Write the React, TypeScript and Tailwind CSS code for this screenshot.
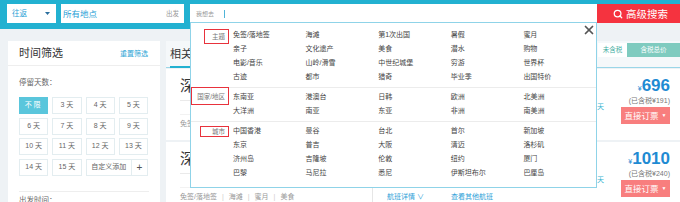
import { Search, X } from "lucide-react";

const themes = [
  ["免签/落地签", "海滩", "第1次出国", "暑假", "蜜月"],
  ["亲子", "文化遗产", "美食", "潜水", "购物"],
  ["电影/音乐", "山岭/滑雪", "中世纪城堡", "穷游", "世界杯"],
  ["古迹", "都市", "猎奇", "毕业季", "出国特价"],
];
const regions = [
  ["东南亚", "港澳台", "日韩", "欧洲", "北美洲"],
  ["大洋洲", "南亚", "东亚", "非洲", "南美洲"],
];
const cities = [
  ["中国香港", "曼谷", "台北", "首尔", "新加坡"],
  ["东京", "普吉", "大阪", "清迈", "洛杉矶"],
  ["济州岛", "吉隆坡", "伦敦", "纽约", "厦门"],
  ["巴黎", "马尼拉", "悉尼", "伊斯坦布尔", "巴厘岛"],
];
const days = ["3 天", "4 天", "5 天", "6 天", "7 天", "8 天", "9 天", "10 天", "11 天", "12 天", "13 天", "14 天", "15 天"];

const sections = [
  { label: "主题", rows: themes, box: "mt-[1px] h-[15px] w-[25px]", wrap: "pt-[5px] pb-[3px] border-b border-[#ececec]" },
  { label: "国家/地区", rows: regions, box: "-mt-[3px] h-[18px] w-[38px]", wrap: "pt-[2px] pb-[3px] border-b border-[#ececec]" },
  { label: "城市", rows: cities, box: "mt-[2px] h-[11px] w-[29px]", wrap: "pt-[2px] pb-[7px]" },
];

function Card({ price, tax }: { price: string; tax: string }) {
  return (
    <div className="flex h-[71px] bg-white">
      <div className="flex w-[431px] flex-col pl-[14px]">
        <div className="flex h-[32px] items-center border-b border-[#eaeaea] pt-[3px] text-[15px] leading-[18px] text-[#333]">
          深圳 — 曼谷 5天4晚自由行
        </div>
        <div className="h-[13px]" />
        <div className="flex flex-1 border-t border-[#f2f2f2]">
          <div className="flex w-[192px] items-start gap-[5px] pt-[4px] text-[7px] leading-[9px] text-[#999]">
            <span>免签/落地签</span><span className="text-[#ccc]">|</span><span>海滩</span>
            <span className="text-[#ccc]">|</span><span>蜜月</span><span className="text-[#ccc]">|</span><span>美食</span>
          </div>
          <div className="flex gap-[27px] border-l border-[#e6e6e6] pl-[14px] pt-[4px] text-[7px] leading-[9px] text-[#2ea1d8]">
            <span>航班详情 ∨</span>
            <span>查看其他航班</span>
          </div>
        </div>
      </div>
      <div className="w-[24px] pt-[33px] text-[7px] leading-[9px] text-[#3ab5d0]">天</div>
      <div className="flex flex-1 flex-col items-end pr-[10px] pt-[9px]">
        <div className="flex items-baseline leading-[16px] text-[#1f8bd3]">
          <span className="text-[7px]">¥</span>
          <span className="text-[17px] font-bold">{price}</span>
        </div>
        <div className="text-[7px] leading-[8px] text-[#777]">(已含税¥{tax})</div>
        <div className="mt-[2px] flex h-[17px] w-[49px] items-center justify-center gap-[3px] bg-[#f87e7e] text-white">
          <span className="text-[8.5px] leading-[10px]">直接订票</span>
          <span className="text-[5px]">▼</span>
        </div>
      </div>
    </div>
  );
}

export default function App() {
  return (
    <div className="relative h-[202px] w-[680px] overflow-hidden bg-[#eef2f5] font-[Liberation_Sans,Noto_Sans_CJK_SC,sans-serif]">
      <div className="flex h-[29px] bg-[#22b1d1] pl-[7px] pt-[4px]">
        <div className="flex h-[19px] w-[49px] items-center justify-between bg-white pl-[5px] pr-[6px]">
          <span className="text-[7.5px] leading-[10px] text-[#2a9fd6]">往返</span>
          <svg width="5" height="3" viewBox="0 0 5 3"><path d="M0 0h5L2.5 3z" fill="#2b6f9e" /></svg>
        </div>
        <div className="ml-[5px] flex h-[19px] w-[123px] items-center justify-between bg-white pl-[2px] pr-[5px]">
          <span className="text-[8.5px] leading-[10px] text-[#2a9fd6]">所有地点</span>
          <span className="text-[6.5px] leading-[10px] text-[#999]">出发</span>
        </div>
        <div className="ml-[6px] flex h-[19px] w-[407px] items-center bg-white pl-[6px]">
          <span className="text-[6px] leading-[10px] text-[#999]">我想去</span>
          <span className="ml-[10px] h-[8px] w-px bg-[#4fb4d8]" />
        </div>
        <div className="flex w-[83px] flex-col">
          <div className="flex h-[19px] items-center bg-[#f5333f] pl-[16px] text-white">
            <Search size={10} strokeWidth={3} />
            <span className="ml-[3px] text-[10.5px] leading-[12px]">高级搜索</span>
          </div>
          <div className="flex-1 bg-[#eef2f5]" />
        </div>
      </div>

      <div className="flex pt-[12px]">
        <div className="ml-[8px] w-[152px] bg-white pb-[20px]">
          <div className="flex h-[25px] items-center justify-between border-b border-[#eeeeee] pl-[11px] pr-[12px]">
            <span className="text-[11px] leading-[14px] text-[#333]">时间筛选</span>
            <span className="text-[7px] leading-[9px] text-[#2fa6d6]">重置筛选</span>
          </div>
          <div className="px-[11px] pt-[12px]">
            <div className="text-[7.5px] leading-[10px] text-[#666]">停留天数：</div>
            <div className="mt-[9px] grid w-[129px] grid-cols-4 gap-x-[4px] gap-y-[3.5px]">
              <div className="flex h-[17px] items-center justify-center bg-[#5ac6dc] text-[7px] tracking-[2px] text-white">不限</div>
              {days.map((d) => (
                <div key={d} className="flex h-[17px] items-center justify-center border border-[#e3edf0] text-[7px] text-[#666]">
                  {d}
                </div>
              ))}
              <div className="col-span-2 flex h-[17px] border border-[#e3edf0] text-[7px] text-[#666]">
                <div className="flex flex-1 items-center justify-center border-r border-[#e3edf0]">自定义添加</div>
                <div className="flex w-[15px] items-center justify-center text-[10px] text-[#555]">+</div>
              </div>
            </div>
            <div className="mt-[15px] border-t border-[#eeeeee] pt-[4px] text-[7.5px] leading-[10px] text-[#666]">出发时间：</div>
          </div>
        </div>

        <div className="ml-[6px] flex-1">
          <div className="flex h-[27px] justify-between border-b border-[#9ad6e8] bg-[#f5f8fa]">
            <div className="ml-[4px] flex h-[27px] w-[80px] items-center border-b-2 border-[#22b1d1] text-[11px] leading-[14px] text-[#333]">
              相关行程
            </div>
            <div className="mt-[2px] flex h-[14px] text-[6.5px] leading-[14px]">
              <div className="w-[29px] bg-white text-center text-[#3fae9f]">未含税</div>
              <div className="w-[53px] bg-[#7fcbbf] text-center text-white">含税总价</div>
            </div>
          </div>
          <div className="mt-[1px] flex flex-col gap-[2px]">
            <Card price="696" tax="191" />
            <Card price="1010" tax="240" />
          </div>
        </div>
      </div>

      <div className="absolute left-[190px] top-[22px] z-10 w-[407px] border border-[#8fd3e8] bg-white">
        <X className="absolute right-0 top-0" size={14} strokeWidth={3} color="#555" />
        {sections.map((s) => (
          <div key={s.label} className={`flex ${s.wrap}`}>
            <div className="flex w-[42px] items-start justify-end pr-[4px]">
              <div className={`${s.box} border border-[#e8323c] pr-[3px] text-right text-[6.5px] leading-[9px] text-[#777] flex items-center justify-end`}>
                {s.label}
              </div>
            </div>
            <div className="grid w-[364px] grid-cols-5">
              {s.rows.flat().map((t) => (
                <div key={t} className="h-[14px] text-[7px] leading-[14px] text-[#444]">{t}</div>
              ))}
            </div>
          </div>
        ))}
      </div>
    </div>
  );
}
